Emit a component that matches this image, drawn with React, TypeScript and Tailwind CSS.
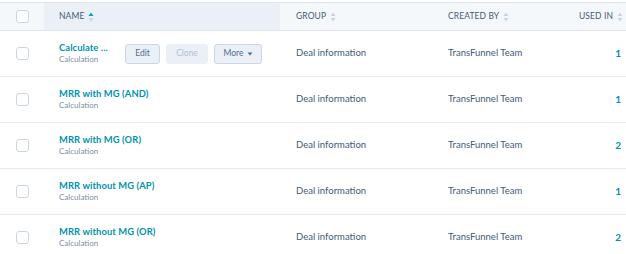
import React from "react";

const rows = [
  { name: "Calculate ...", used: "1", first: true },
  { name: "MRR with MG (AND)", used: "1" },
  { name: "MRR with MG (OR)", used: "2" },
  { name: "MRR without MG (AP)", used: "1" },
  { name: "MRR without MG (OR)", used: "2" },
];

function Checkbox() {
  return <div className="w-[13px] h-[13px] rounded-[3px] border border-[#cbd6e2] bg-white" />;
}

function SortIcon({ active }: { active?: boolean }) {
  return (
    <svg width="6" height="10" viewBox="0 0 6 10" className="ml-[4px]">
      <path d="M3 0.5 L5.5 4 L0.5 4 Z" fill={active ? "#00a4bd" : "#cbd6e2"} />
      <path d="M3 9.5 L5.5 6 L0.5 6 Z" fill="#cbd6e2" />
    </svg>
  );
}

export default function App() {
  const cols = "grid grid-cols-[44px_236px_152px_108px_1fr]";
  return (
    <div className="w-[626px] h-[254px] overflow-hidden bg-white text-[#33475b]" style={{ fontFamily: "Lato, 'Open Sans', sans-serif" }}>
      <div className="h-[2px]" />
      <div className={`${cols} h-[29px] bg-[#f5f8fa] border-t border-b border-[#dfe3eb] text-[8.5px] tracking-[0.1px] text-[#425b76]`}>
        <div className="flex items-center justify-center"><Checkbox /></div>
        <div className="flex items-center pl-[15px] bg-[#eaf0f6]">NAME<SortIcon active /></div>
        <div className="flex items-center pl-[16px]">GROUP<SortIcon /></div>
        <div className="flex items-center pl-[16px]">CREATED BY<SortIcon /></div>
        <div className="flex items-center justify-end pr-[3px]">USED IN<SortIcon /></div>
      </div>
      {rows.map((r, i) => (
        <div key={i} className={`${cols} h-[46px] border-b border-[#e5e9f0] text-[9.5px] text-[#425b76]`}>
          <div className="flex items-center justify-center"><Checkbox /></div>
          <div className="flex items-center pl-[15px]">
            <div className={`flex flex-col leading-[11px] ${r.first ? "w-[66px]" : ""}`}>
              <span className="text-[#0091ae] font-bold text-[9.4px] tracking-[0.1px]">{r.name}</span>
              <span className="text-[#7c8da0] text-[8px] mt-[1px]">Calculation</span>
            </div>
            {r.first && (
              <div className="flex items-center gap-[6px] text-[8.5px]">
                <div className="w-[35px] h-[20px] flex items-center justify-center rounded-[3px] border border-[#cbd6e2] bg-[#eaf0f6] text-[#506e91]">Edit</div>
                <div className="w-[42px] h-[20px] flex items-center justify-center rounded-[3px] bg-[#eaf0f6] text-[#b0c1d4]">Clone</div>
                <div className="w-[48px] h-[20px] flex items-center justify-center rounded-[3px] border border-[#cbd6e2] bg-[#eaf0f6] text-[#506e91]">
                  More
                  <svg width="6" height="4" viewBox="0 0 6 4" className="ml-[3px]"><path d="M0.5 0.5 L5.5 0.5 L3 3.5 Z" fill="#506e91" /></svg>
                </div>
              </div>
            )}
          </div>
          <div className="flex items-center pl-[16px]">Deal information</div>
          <div className="flex items-center pl-[16px]">TransFunnel Team</div>
          <div className="flex items-center justify-end pr-[5px] text-[#0091ae] font-bold text-[10px]">{r.used}</div>
        </div>
      ))}
    </div>
  );
}
